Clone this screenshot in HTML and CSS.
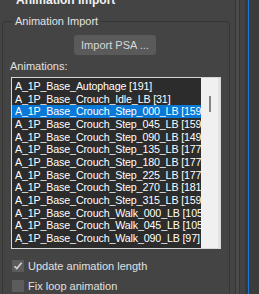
FILE: index.html
```html
<!DOCTYPE html>
<html>
<head>
<meta charset="utf-8">
<link rel="stylesheet" href="styles.css">
</head>
<body>
<div class="panel">
  <div class="main">
    <div class="rollout-title">Animation Import</div>
    <fieldset class="group">
      <legend>Animation Import</legend>
      <div class="btn-row"><button class="btn">Import PSA ...</button></div>
      <div class="label">Animations:</div>
      <div class="listbox">
        <ul class="items">
          <li>A_1P_Base_Autophage [191]</li>
          <li>A_1P_Base_Crouch_Idle_LB [31]</li>
          <li class="sel">A_1P_Base_Crouch_Step_000_LB [159]</li>
          <li>A_1P_Base_Crouch_Step_045_LB [159]</li>
          <li>A_1P_Base_Crouch_Step_090_LB [149]</li>
          <li>A_1P_Base_Crouch_Step_135_LB [177]</li>
          <li>A_1P_Base_Crouch_Step_180_LB [177]</li>
          <li>A_1P_Base_Crouch_Step_225_LB [177]</li>
          <li>A_1P_Base_Crouch_Step_270_LB [181]</li>
          <li>A_1P_Base_Crouch_Step_315_LB [159]</li>
          <li>A_1P_Base_Crouch_Walk_000_LB [105]</li>
          <li>A_1P_Base_Crouch_Walk_045_LB [105]</li>
          <li>A_1P_Base_Crouch_Walk_090_LB [97]</li>
        </ul>
        <div class="scrollbar"><div class="thumb"></div></div>
      </div>
      <label class="check"><span class="box"><svg width="12" height="12" viewBox="0 0 12 12"><path d="M2.5 6.2 L4.8 8.6 L9.6 2.8" fill="none" stroke="#d6d6d6" stroke-width="1.6"/></svg></span>Update animation length</label>
      <label class="check"><span class="box"></span>Fix loop animation</label>
    </fieldset>
  </div>
  <div class="rail">
    <div class="s s1"></div>
    <div class="s s2"></div>
    <div class="s s3"></div>
    <div class="s s4"></div>
    <div class="s s5"></div>
    <div class="s s6"></div>
    <div class="s s7"></div>
  </div>
</div>
</body>
</html>
```

FILE: styles.css
```css
html, body {
  margin: 0;
  padding: 0;
  height: 294px;
  overflow: hidden;
}
body {
  background: #444444;
  font-family: "Liberation Sans", Arial, sans-serif;
  font-size: 11px;
  color: #dcdcdc;
  width: 259px;
}
.panel {
  display: flex;
  height: 294px;
  overflow: hidden;
}
.main {
  width: 235px;
  flex: none;
  overflow: hidden;
}
.rollout-title {
  font-weight: bold;
  font-size: 12px;
  line-height: 14px;
  height: 14px;
  margin-top: -7px;
  padding-left: 16px;
  color: #f2f2f2;
}
.group {
  box-sizing: border-box;
  width: 228px;
  margin: 8px 0 0 2px;
  padding: 0 8px;
  border: 1px solid #363636;
  border-radius: 3px;
  min-width: 0;
  height: 290px;
}
.group legend {
  font-size: 11px;
  line-height: 13px;
  padding: 0 2px;
  margin-left: 2px;
  color: #e2e2e2;
}
.btn-row {
  display: flex;
  justify-content: center;
  margin-top: 7px;
}
.btn {
  width: 82px;
  height: 20px;
  border: none;
  border-radius: 3px;
  background: #5a5a5a;
  color: #d8d8d8;
  font-family: inherit;
  font-size: 11px;
  padding: 0;
  margin-left: -2px;
}
.label {
  margin: 5px 0 4px -1px;
  line-height: 13px;
  color: #e0e0e0;
}
.listbox {
  display: flex;
  height: 172px;
  box-sizing: border-box;
  border: 1px solid #d8d8d8;
  background: #2c2c2c;
}
.items {
  list-style: none;
  margin: 0;
  padding: 2px 0 0 0;
  flex: 1;
  min-width: 0;
  overflow: hidden;
}
.items li {
  white-space: nowrap;
  line-height: 12.67px;
  height: 12.67px;
  padding-left: 3px;
  color: #ffffff;
  font-size: 10.7px;
  letter-spacing: -0.15px;
}
.items li.sel {
  background: #0a78d7;
}
.scrollbar {
  width: 19px;
  flex: none;
  background: #f0f0f0;
  display: flex;
  padding: 18px 0 0 8px;
  box-sizing: border-box;
  border-right: 2px solid #e2e2e2;
}
.thumb {
  width: 2px;
  height: 16px;
  background: #858585;
}
.check {
  display: flex;
  align-items: center;
  height: 13px;
  margin: 10px 0 0 1px;
  color: #e0e0e0;
  gap: 4px;
}
.check + .check {
  margin-top: 7px;
}
.box {
  width: 12px;
  height: 12px;
  background: #5c5c5c;
  border-radius: 1px;
  display: flex;
  flex: none;
}
.rail {
  flex: 1;
  display: flex;
}
.s { height: 294px; flex: none; }
.s1 { width: 1px; background: #353535; }
.s2 { width: 3px; background: #4b4b4b; }
.s3 { width: 1px; background: #363636; }
.s4 { width: 5px; background: #424242; }
.s5 { width: 3px; background: #393939; }
.s6 { width: 1px; background: #1a78d8; }
.s7 { flex: 1; background: #3c3c3c; }
```
